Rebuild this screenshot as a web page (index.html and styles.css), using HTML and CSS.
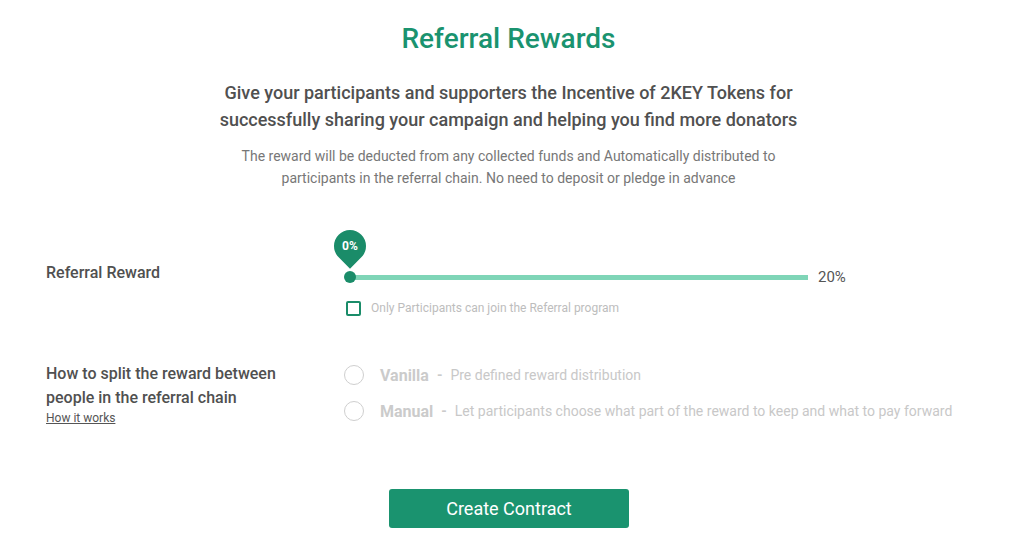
FILE: index.html
```html
<!DOCTYPE html>
<html lang="en">
<head>
<meta charset="utf-8">
<title>Referral Rewards</title>
<link rel="stylesheet" href="styles.css">
</head>
<body>
<main class="page">
  <header class="intro">
    <h1 class="title">Referral Rewards</h1>
    <p class="lead">Give your participants and supporters the Incentive of 2KEY Tokens for successfully sharing your campaign and helping you find more donators</p>
    <p class="note">The reward will be deducted from any collected funds and Automatically distributed to participants in the referral chain. No need to deposit or pledge in advance</p>
  </header>

  <section class="settings">
    <div class="row row-reward">
      <div class="label">Referral Reward</div>
      <div class="control">
        <div class="slider-line">
          <div class="slider">
            <div class="track"></div>
            <div class="thumb"></div>
            <div class="pin"><span class="pin-text">0%</span></div>
          </div>
          <span class="max">20%</span>
        </div>
        <label class="check">
          <span class="check-box"></span>
          <span class="check-text">Only Participants can join the Referral program</span>
        </label>
      </div>
    </div>

    <div class="row row-split">
      <div class="label-block">
        <div class="label">How to split the reward between people in the referral chain</div>
        <a class="how" href="#">How it works</a>
      </div>
      <div class="options">
        <div class="option">
          <span class="radio"></span>
          <span class="opt-name">Vanilla</span>
          <span class="opt-sep">-</span>
          <span class="opt-desc">Pre defined reward distribution</span>
        </div>
        <div class="option">
          <span class="radio"></span>
          <span class="opt-name">Manual</span>
          <span class="opt-sep">-</span>
          <span class="opt-desc">Let participants choose what part of the reward to keep and what to pay forward</span>
        </div>
      </div>
    </div>
  </section>

  <div class="actions">
    <button class="btn" type="button">Create Contract</button>
  </div>
</main>
</body>
</html>
```

FILE: styles.css
```css
* { box-sizing: border-box; }

html, body {
  margin: 0;
  padding: 0;
  background: #ffffff;
}

body {
  font-family: Roboto, "Liberation Sans", Arial, sans-serif;
  color: #4a4a4a;
  width: 1009px;
  height: 537px;
  overflow: hidden;
}

.page {
  display: flex;
  flex-direction: column;
}

.intro {
  display: flex;
  flex-direction: column;
  align-items: center;
  padding-left: 8px;
  text-align: center;
}

.title {
  margin: 22px 0 0;
  font-size: 28px;
  line-height: 34px;
  font-weight: 500;
  color: #1a936f;
}

.lead {
  margin: 23px 0 0;
  max-width: 590px;
  font-size: 18px;
  line-height: 27px;
  font-weight: 500;
  color: #505050;
}

.note {
  margin: 13px 0 0;
  max-width: 560px;
  font-size: 14px;
  line-height: 21.5px;
  color: #777777;
}

.settings {
  display: flex;
  flex-direction: column;
  padding-left: 46px;
  margin-top: 71px;
}

.row {
  display: grid;
  grid-template-columns: 298px 1fr;
  align-items: start;
}

.label {
  font-size: 16px;
  line-height: 24px;
  font-weight: 500;
  color: #505050;
}

.row-reward .label {
  margin-top: 1px;
}

.control {
  display: flex;
  flex-direction: column;
}

.slider-line {
  display: flex;
  align-items: center;
  height: 24px;
  margin-top: 5px;
}

.slider {
  position: relative;
  width: 464px;
  height: 12px;
  padding-left: 6px;
  display: flex;
  align-items: center;
}

.track {
  width: 458px;
  height: 5px;
  background: #7fd5b7;
}

.thumb {
  position: absolute;
  left: 0;
  top: 0;
  width: 12px;
  height: 12px;
  border-radius: 50%;
  background: #1a8c69;
}

.pin {
  position: absolute;
  left: -10px;
  top: -41px;
  width: 32px;
  height: 32px;
  border-radius: 50% 50% 50% 0;
  background: #1a8c69;
  transform: rotate(-45deg);
  display: flex;
  align-items: center;
  justify-content: center;
}

.pin-text {
  transform: rotate(45deg);
  color: #ffffff;
  font-size: 12px;
  font-weight: 700;
  line-height: 12px;
}

.max {
  margin-left: 10px;
  font-size: 15px;
  line-height: 20px;
  color: #555555;
}

.check {
  display: flex;
  align-items: center;
  gap: 10px;
  margin-top: 12px;
  margin-left: 2px;
  height: 15px;
}

.check-box {
  width: 15px;
  height: 15px;
  border: 2px solid #1a8c69;
  border-radius: 2px;
}

.check-text {
  font-size: 12px;
  line-height: 15px;
  color: #bdbdbd;
}

.row-split {
  margin-top: 46px;
}

.label-block {
  display: flex;
  flex-direction: column;
  align-items: flex-start;
}

.label-block .label {
  width: 250px;
}

.how {
  font-size: 12px;
  line-height: 16px;
  color: #555555;
  text-decoration: underline;
}

.options {
  display: flex;
  flex-direction: column;
  gap: 12px;
  margin-top: 1px;
}

.option {
  display: flex;
  align-items: center;
  gap: 8px;
  height: 24px;
  white-space: nowrap;
}

.radio {
  width: 20px;
  height: 20px;
  border: 1px solid #cfcfcf;
  border-radius: 50%;
  margin-right: 8px;
}

.opt-name {
  font-size: 16px;
  font-weight: 700;
  color: #cbcbcb;
}

.opt-sep {
  font-size: 14px;
  font-weight: 700;
  color: #cbcbcb;
}

.opt-desc {
  font-size: 14px;
  color: #c8c8c8;
}

.actions {
  display: flex;
  justify-content: center;
  padding-left: 9px;
  margin-top: 63px;
}

.btn {
  width: 240px;
  height: 39px;
  border: none;
  border-radius: 3px;
  background: #1a936f;
  color: #ffffff;
  font-family: Roboto, "Liberation Sans", Arial, sans-serif;
  font-size: 18px;
  font-weight: 400;
  cursor: pointer;
}
```
